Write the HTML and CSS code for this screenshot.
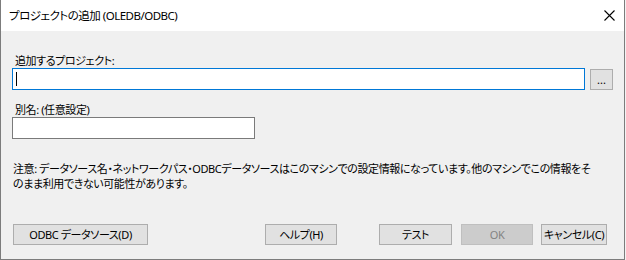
FILE: index.html
```html
<!DOCTYPE html>
<html lang="ja">
<head>
<meta charset="utf-8">
<title>プロジェクトの追加 (OLEDB/ODBC)</title>
<link rel="stylesheet" href="styles.css">
</head>
<body>
<div class="window">
  <div class="titlebar">
    <span class="title">プロジェクトの追加 (OLEDB/ODBC)</span>
    <span class="close" aria-label="閉じる">
      <svg width="11" height="11" viewBox="0 0 11 11"><path d="M0.5 0.5 L10.5 10.5 M10.5 0.5 L0.5 10.5" stroke="#000" stroke-width="1.1" fill="none"/></svg>
    </span>
  </div>
  <div class="content">
    <div class="label first">追加するプロジェクト:</div>
    <div class="row">
      <div class="input wide focused"><span class="caret"></span></div>
      <div class="btn browse">...</div>
    </div>
    <div class="label second">別名: (任意設定)</div>
    <div class="input alias"></div>
    <p class="note">注意: データソース名・ネットワークパス・ODBCデータソースはこのマシンでの設定情報になっています。他のマシンでこの情報をそ<br>のまま利用できない可能性があります。</p>
    <div class="buttons">
      <div class="btn odbc">ODBC データソース(D)</div>
      <div class="btn help">ヘルプ(H)</div>
      <div class="btn test">テスト</div>
      <div class="btn ok disabled">OK</div>
      <div class="btn cancel">キャンセル(C)</div>
    </div>
  </div>
</div>
</body>
</html>
```
FILE: styles.css
```css
html, body {
  margin: 0;
  padding: 0;
  background: #f3f3f3;
}
body {
  font-family: "Noto Sans", "Noto Sans CJK JP", sans-serif;
  font-size: 11px;
  letter-spacing: -0.4px;
  color: #000;
  width: 626px;
  height: 260px;
  overflow: hidden;
  font-feature-settings: "palt";
}
.window {
  box-sizing: border-box;
  width: 625px;
  height: 260px;
  background: #f0f0f0;
  border-left: 1px solid #7c7c7c;
  border-right: 1px solid #7c7c7c;
  border-bottom: 1px solid #7c7c7c;
  display: flex;
  flex-direction: column;
}
.titlebar {
  height: 31px;
  flex: none;
  background: #fff;
  display: flex;
  align-items: center;
  justify-content: space-between;
  padding-left: 8px;
  padding-right: 9px;
}
.title {
  line-height: 15px;
  font-size: 11.5px;
  letter-spacing: -0.5px;
}
.close {
  display: flex;
}
.content {
  flex: 1;
  display: flex;
  flex-direction: column;
  padding-left: 11px;
}
.label {
  line-height: 15px;
  padding-left: 3px;
}
.label.first { margin-top: 22px; }
.label.second { margin-top: 12px; }
.row {
  display: flex;
  align-items: flex-start;
  gap: 5px;
}
.input {
  box-sizing: border-box;
  height: 22px;
  background: #fff;
  border: 1px solid #7a7a7a;
  position: relative;
}
.input.wide {
  width: 573px;
}
.input.focused {
  border-color: #0078d7;
}
.caret {
  position: absolute;
  left: 3px;
  top: 3px;
  width: 1px;
  height: 14px;
  background: #000;
}
.input.alias {
  width: 243px;
}
.btn {
  box-sizing: border-box;
  height: 21px;
  background: #e1e1e1;
  border: 1px solid #adadad;
  display: flex;
  align-items: center;
  justify-content: center;
  line-height: 15px;
  white-space: nowrap;
}
.btn.browse {
  width: 23px;
  margin-top: 1px;
  align-items: flex-end;
  padding-bottom: 2px;
  letter-spacing: 0;
}
.note {
  margin: 22px 0 0 1px;
  line-height: 15px;
  white-space: nowrap;
}
.buttons {
  display: flex;
  margin-top: 33px;
  padding-left: 1px;
}
.btn.odbc { width: 135px; }
.btn.help { width: 72px; margin-left: 117px; }
.btn.test { width: 73px; margin-left: 42px; }
.btn.ok { width: 72px; margin-left: 9px; }
.btn.cancel { width: 66px; margin-left: 8px; }
.btn.disabled {
  background: #cccccc;
  border-color: #bfbfbf;
  color: #838383;
}
```
